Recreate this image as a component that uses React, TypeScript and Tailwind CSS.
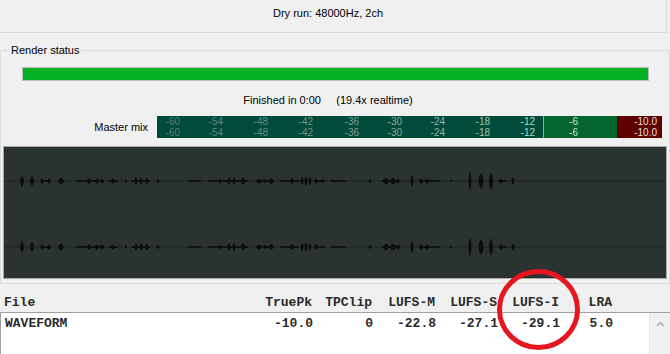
import React from "react";

// page x, half width, half height
const blobs: [number, number, number][] = [
  [22, 2, 6], [32, 2, 5], [42, 1.5, 3], [49, 1.5, 3], [61, 3, 3.5],
  [89, 2, 3], [97, 2, 3], [102, 2, 2.5], [113, 2, 2.5], [126, 1, 2],
  [136, 1.5, 4], [141, 1.5, 4], [147, 1.5, 3.5], [158, 1.5, 2],
  [220, 1, 3], [229, 1.5, 4], [234, 1.5, 4], [243, 2, 4],
  [259, 3, 2.5], [265, 2, 2], [271, 2.5, 3],
  [292, 2, 3], [302, 1.5, 4], [306, 1.5, 5], [310, 1.5, 4], [316, 1.5, 3], [322, 1, 2],
  [333, 1, 1.5], [370, 1.5, 2], [386, 3, 3.5], [393, 3, 3.5], [398, 2, 2.5], [412, 1.5, 6],
  [421, 1.5, 3], [427, 1.5, 3], [451, 1, 1.5],
  [470, 1.5, 10], [481, 2.5, 8], [491, 2, 9], [501, 1.5, 3], [513, 1.5, 4],
];

// thin runs between the blobs
const runs: [number, number][] = [
  [41, 51], [76, 104], [109, 118], [132, 150], [188, 201],
  [208, 248], [256, 274], [280, 299], [314, 325], [331, 346], [382, 400], [419, 440], [498, 507],
];

const meterLabels = [
  { v: "-60", w: "w-[23px]", c: "text-[#5c7d75]" },
  { v: "-54", w: "w-[43px]", c: "text-[#62837a]" },
  { v: "-48", w: "w-[45px]", c: "text-[#6a8b81]" },
  { v: "-42", w: "w-[45px]", c: "text-[#739489]" },
  { v: "-36", w: "w-[46px]", c: "text-[#7e9f93]" },
  { v: "-30", w: "w-[43px]", c: "text-[#89aa9d]" },
  { v: "-24", w: "w-[43px]", c: "text-[#94b6a7]" },
  { v: "-18", w: "w-[45px]", c: "text-[#a0c2b1]" },
  { v: "-12", w: "w-[45px]", c: "text-[#b4d8c1]" },
];

const Channel = ({ cy }: { cy: number }) => (
  <g fill="#0c0e0e">
    <rect x={0} y={cy - 0.5} width={664} height={1} fill="#1d2222" />
    {runs.map(([a, b]) => (
      <rect key={a} x={a - 4} y={cy - 0.8} width={b - a} height={1.6} />
    ))}
    {blobs.map(([x, w, h], i) => {
      const px = x - 4;
      return (
        <path
          key={i}
          d={`M${px} ${cy - h} Q${px + w * 2} ${cy} ${px} ${cy + h} Q${px - w * 2} ${cy} ${px} ${cy - h}Z`}
        />
      );
    })}
  </g>
);

const Columns = ({ cells }: { cells: string[] }) => (
  <div className="flex pl-[4px]">
    <div className="w-[250px]">{cells[0]}</div>
    <div className="w-[58px] text-right">{cells[1]}</div>
    <div className="w-[60px] text-right">{cells[2]}</div>
    <div className="w-[63px] text-right">{cells[3]}</div>
    <div className="w-[62px] text-right">{cells[4]}</div>
    <div className="w-[62px] text-right">{cells[5]}</div>
    <div className="w-[53px] text-right">{cells[6]}</div>
  </div>
);

export default function App() {
  return (
    <div className="relative flex h-[354px] w-[670px] flex-col overflow-hidden bg-[#f0f0f0] font-['Liberation_Sans',Arial,sans-serif] text-[11px] text-black">
      {/* TOP PANEL */}
      <div className="h-[33px] w-[667px] shrink-0 border-b border-r border-[#dadada] pt-[6px] pr-[10px] text-center leading-[14px]">
        Dry run: 48000Hz, 2ch
      </div>

      {/* RENDER STATUS */}
      <fieldset className="mt-[10px] h-[241px] shrink-0 border border-[#dcdcdc]">
        <legend className="ml-[8px] px-[2px] leading-[14px]">Render status</legend>

        <div className="ml-[21px] mt-[10px] h-[14px] w-[627px] border border-[#bcbcbc] bg-[#06b025]" />

        <div className="mt-[12px] whitespace-pre pr-[14px] text-center leading-[14px]">
          {"Finished in 0:00     (19.4x realtime)"}
        </div>

        {/* MASTER MIX METER */}
        <div className="mt-[9px] flex items-center">
          <div className="w-[147px] text-right leading-[14px]">Master mix</div>
          <div className="ml-[9px] flex h-[22px] w-[505px] text-[10px] leading-[11px]">
            <div className="flex w-[386px] flex-col bg-[#014b3b]">
              {[0, 1].map((r) => (
                <div key={r} className="flex h-[11px]">
                  {meterLabels.map((l) => (
                    <div key={l.v} className={`${l.w} ${l.c} shrink-0 text-right`}>
                      {l.v}
                    </div>
                  ))}
                </div>
              ))}
            </div>
            <div className="w-[1px] bg-[#3ddc78]" />
            <div className="flex w-[73px] flex-col bg-[#05652f] text-[#c3e6cd]">
              <div className="w-[34px] text-right">-6</div>
              <div className="w-[34px] text-right">-6</div>
            </div>
            <div className="flex w-[45px] flex-col bg-[#5e0000] pr-[5px] text-right text-[#ecdcdc]">
              <div>-10.0</div>
              <div>-10.0</div>
            </div>
          </div>
        </div>

        {/* WAVEFORM */}
        <div className="ml-[2px] mt-[8px] h-[133px] w-[664px] border border-[#a9a9a9] bg-[#2b3232]">
          <svg width="662" height="131" viewBox="0 0 662 131">
            <Channel cy={34} />
            <Channel cy={100} />
          </svg>
        </div>
      </fieldset>

      {/* TABLE */}
      <div className="h-[28px] shrink-0 pt-[11px] font-['Liberation_Mono','Courier_New',monospace] text-[13px] font-bold leading-[15px] text-[#2a2a2a]">
        <Columns cells={["File", "TruePk", "TPClip", "LUFS-M", "LUFS-S", "LUFS-I", "LRA"]} />
      </div>
      <div className="flex flex-1 border-l border-t border-[#a0a0a0] bg-white">
        <div className="flex-1 pt-[3px] font-['Liberation_Mono','Courier_New',monospace] text-[13px] font-bold leading-[15px] text-[#2a2a2a]">
          <Columns cells={["WAVEFORM", "-10.0", "0", "-22.8", "-27.1", "-29.1", "5.0"]} />
        </div>
        <div className="flex w-[21px] justify-center border-l border-[#e6e6e6] bg-[#f0f0f0] pt-[8px]">
          <svg width="9" height="6" viewBox="0 0 9 6">
            <path d="M1 5 L4.5 1.5 L8 5" fill="none" stroke="#a6a6a6" strokeWidth="1.4" />
          </svg>
        </div>
      </div>

      {/* ANNOTATION */}
      <svg
        className="pointer-events-none absolute left-0 top-0"
        width="670"
        height="354"
        viewBox="0 0 670 354"
      >
        <ellipse cx="538.5" cy="309.5" rx="39" ry="38" fill="none" stroke="#e5161f" strokeWidth="5" />
      </svg>
    </div>
  );
}
